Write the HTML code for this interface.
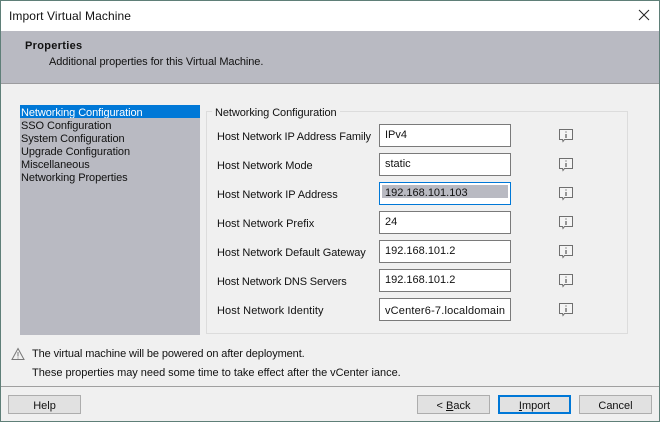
<!DOCTYPE html>
<html><head><meta charset="utf-8"><style>
html,body{margin:0;padding:0}
body{width:660px;height:422px;position:relative;overflow:hidden;background:#f0f0f0;font-family:"Liberation Sans",sans-serif;font-size:11px;color:#111}
.a{position:absolute;white-space:nowrap}
.t{line-height:14px;height:14px}
.inp{position:absolute;left:379px;width:130px;height:21px;border:1px solid #7a7a7a;background:#fff}
.v{position:absolute;left:385px;line-height:14px;white-space:nowrap}
.l{position:absolute;left:217px;line-height:14px;white-space:nowrap;letter-spacing:-.06px}
.b{position:absolute;top:395px;width:71px;height:17px;border:1px solid #adadad;background:#e1e1e1;text-align:center;line-height:20px}
.li{position:absolute;left:21px;line-height:13px;white-space:nowrap;letter-spacing:-.08px}
svg{position:absolute}
</style></head><body>
<div class="a" style="left:0;top:0;width:660px;height:31px;background:#fff"></div>
<div class="a t" style="left:9px;top:9px;font-size:12px;letter-spacing:.1px">Import Virtual Machine</div>
<svg style="left:638px;top:9px" width="13" height="13" viewBox="0 0 13 13"><path d="M1 1L11 11M11 1L1 11" stroke="#222" stroke-width="1" fill="none"/></svg>
<div class="a" style="left:1px;top:31px;width:658px;height:52px;background:#b9bac2;border-bottom:1px solid #9c9c9f"></div>
<div class="a t" style="left:25px;top:39px;font-weight:bold;letter-spacing:.3px">Properties</div>
<div class="a t" style="left:49px;top:55px;letter-spacing:-.08px">Additional properties for this Virtual Machine.</div>

<div class="a" style="left:20px;top:105px;width:180px;height:230px;background:#b9bac2"></div>
<div class="a" style="left:20px;top:105px;width:180px;height:13px;background:#0078d7"></div>
<div class="li" style="top:107px;height:11px;overflow:hidden;color:#fff">Networking Configuration</div>
<div class="li" style="top:120px">SSO Configuration</div>
<div class="li" style="top:133px">System Configuration</div>
<div class="li" style="top:146px">Upgrade Configuration</div>
<div class="li" style="top:159px">Miscellaneous</div>
<div class="li" style="top:172px">Networking Properties</div>

<div class="a" style="left:206px;top:111px;width:420px;height:221px;border:1px solid #dcdcdc"></div>
<div class="a t" style="left:212px;top:106px;padding:0 3px;background:#f0f0f0;letter-spacing:-.08px">Networking Configuration</div>

<div class="l" style="top:130px;letter-spacing:-.12px">Host Network IP Address Family</div>
<div class="l" style="top:159px">Host Network Mode</div>
<div class="l" style="top:188px">Host Network IP Address</div>
<div class="l" style="top:217px;letter-spacing:0">Host Network Prefix</div>
<div class="l" style="top:246px">Host Network Default Gateway</div>
<div class="l" style="top:275px;letter-spacing:-.15px">Host Network DNS Servers</div>
<div class="l" style="top:304px;letter-spacing:.1px">Host Network Identity</div>

<div class="inp" style="top:124px"></div><div class="v" style="top:128px">IPv4</div>
<div class="inp" style="top:153px"></div><div class="v" style="top:157px">static</div>
<div class="inp" style="top:182px;border-color:#0078d7"></div>
<div class="a" style="left:382px;top:185px;width:126px;height:13px;background:#b9bac2"></div>
<div class="v" style="top:186px">192.168.101.103</div>
<div class="inp" style="top:211px"></div><div class="v" style="top:215px">24</div>
<div class="inp" style="top:240px"></div><div class="v" style="top:244px">192.168.101.2</div>
<div class="inp" style="top:269px"></div><div class="v" style="top:273px">192.168.101.2</div>
<div class="inp" style="top:298px"></div><div class="v" style="top:304px;letter-spacing:.18px">vCenter6-7.localdomain</div>

<svg style="left:559px;top:129px" width="14" height="14" viewBox="0 0 14 14"><path d="M.5.5H13.5V10.5H5.5L4 12.5L3.5 10.5H.5Z" fill="#f4f4f4" stroke="#6f6f6f"/><path d="M7 2.5V3.5M7 5V9" stroke="#6f6f6f" stroke-width="1.4"/></svg>
<svg style="left:559px;top:158px" width="14" height="14" viewBox="0 0 14 14"><path d="M.5.5H13.5V10.5H5.5L4 12.5L3.5 10.5H.5Z" fill="#f4f4f4" stroke="#6f6f6f"/><path d="M7 2.5V3.5M7 5V9" stroke="#6f6f6f" stroke-width="1.4"/></svg>
<svg style="left:559px;top:187px" width="14" height="14" viewBox="0 0 14 14"><path d="M.5.5H13.5V10.5H5.5L4 12.5L3.5 10.5H.5Z" fill="#f4f4f4" stroke="#6f6f6f"/><path d="M7 2.5V3.5M7 5V9" stroke="#6f6f6f" stroke-width="1.4"/></svg>
<svg style="left:559px;top:216px" width="14" height="14" viewBox="0 0 14 14"><path d="M.5.5H13.5V10.5H5.5L4 12.5L3.5 10.5H.5Z" fill="#f4f4f4" stroke="#6f6f6f"/><path d="M7 2.5V3.5M7 5V9" stroke="#6f6f6f" stroke-width="1.4"/></svg>
<svg style="left:559px;top:245px" width="14" height="14" viewBox="0 0 14 14"><path d="M.5.5H13.5V10.5H5.5L4 12.5L3.5 10.5H.5Z" fill="#f4f4f4" stroke="#6f6f6f"/><path d="M7 2.5V3.5M7 5V9" stroke="#6f6f6f" stroke-width="1.4"/></svg>
<svg style="left:559px;top:274px" width="14" height="14" viewBox="0 0 14 14"><path d="M.5.5H13.5V10.5H5.5L4 12.5L3.5 10.5H.5Z" fill="#f4f4f4" stroke="#6f6f6f"/><path d="M7 2.5V3.5M7 5V9" stroke="#6f6f6f" stroke-width="1.4"/></svg>
<svg style="left:559px;top:303px" width="14" height="14" viewBox="0 0 14 14"><path d="M.5.5H13.5V10.5H5.5L4 12.5L3.5 10.5H.5Z" fill="#f4f4f4" stroke="#6f6f6f"/><path d="M7 2.5V3.5M7 5V9" stroke="#6f6f6f" stroke-width="1.4"/></svg>

<svg style="left:11px;top:347px" width="14" height="14" viewBox="0 0 14 14"><path d="M7 1.5L13 12.5H1Z" fill="none" stroke="#777"/><path d="M7 5V9.5M7 10.5V11.5" stroke="#777"/></svg>
<div class="a t" style="left:32px;top:347px;letter-spacing:-.1px">The virtual machine will be powered on after deployment.</div>
<div class="a t" style="left:32px;top:366px;letter-spacing:-.03px">These properties may need some time to take effect after the vCenter iance.</div>

<div class="a" style="left:1px;top:386px;width:658px;height:1px;background:#a0a0a0"></div>
<div class="b" style="left:8px">Help</div>
<div class="b" style="left:417px">&lt; <u>B</u>ack</div>
<div class="b" style="left:498px;width:69px;height:15px;line-height:18px;border:2px solid #0078d7"><u>I</u>mport</div>
<div class="b" style="left:579px">Cancel</div>
<div class="a" style="left:0;top:0;width:658px;height:420px;border:1px solid #5f7f78"></div>
</body></html>
